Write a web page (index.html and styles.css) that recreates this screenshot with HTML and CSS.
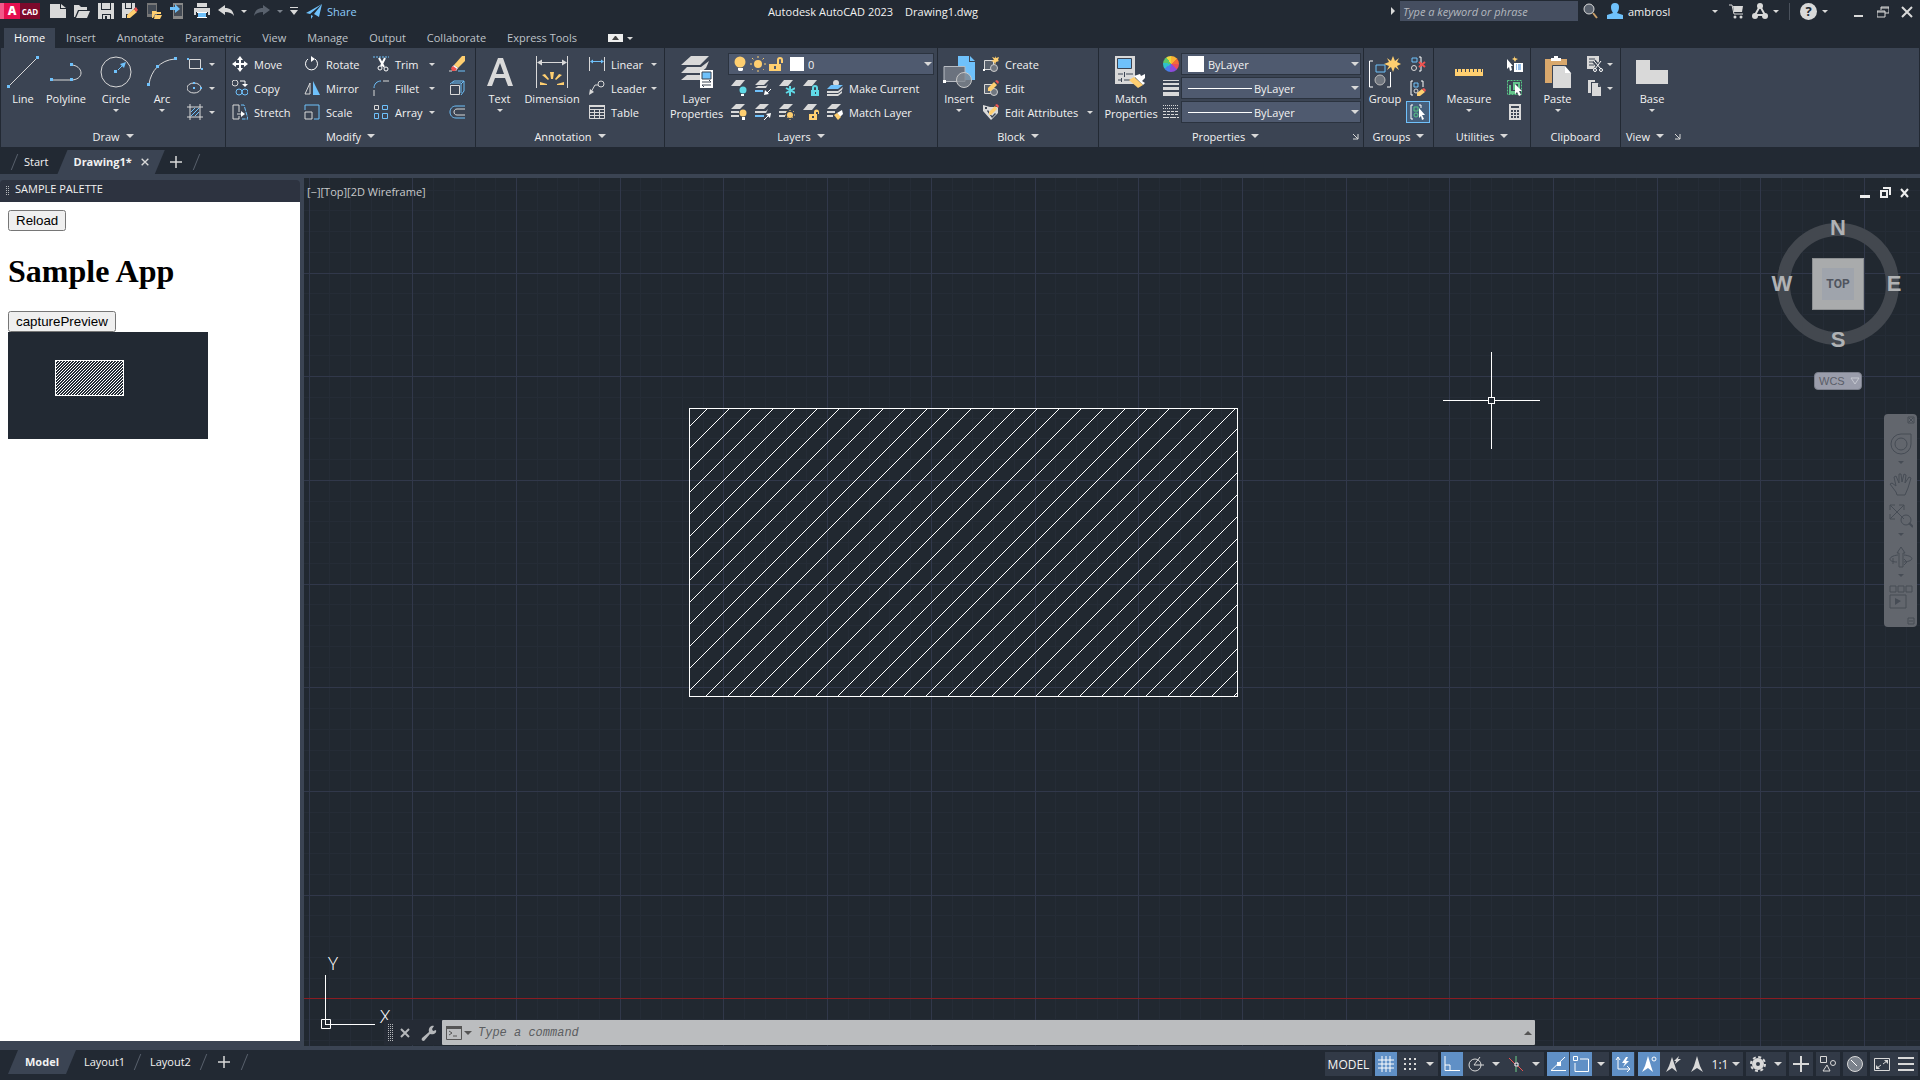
FILE: index.html
```html
<!DOCTYPE html>
<html lang="en">
  <head>
    <meta charset="UTF-8" />
    <meta name="viewport" content="width=device-width, initial-scale=1.0" />
    <title>Autodesk AutoCAD 2023 - Drawing1.dwg</title>
    <link rel="stylesheet" href="styles.css">
  </head>
  <body>
    <!-- Icon sprite -->
    <svg class="sprite" aria-hidden="true">
      <defs>
        <symbol id="new" viewBox="0 0 16 16"><path class="g" d="M0 1h10v5h6v9H0zM11 1l5 4h-5z" /></symbol>
        <symbol id="open" viewBox="0 0 16 16"><path class="g" d="M0 2h5l2 2h6v3H4L1 14H0zM5 8h11l-3 7H2z" /></symbol>
        <symbol id="save" viewBox="0 0 16 16"><path class="g" fill-rule="evenodd" d="M0 0h3v7h10V0h3v16h-3v-5H4v5H0zM4 0h8v6H4zM5 12h7v4H9v-3H7v3H5z" /></symbol>
        <symbol id="saveas" viewBox="0 0 16 16"><path class="g" d="M0 0h3v6h7V0h3v5l-6 6H4v4H0zM4 0h5v5H4z" /><path class="y" d="M5 12l7-6 3 3-7 6H5z" /><path class="r" d="M12 6l2-2 2 3-2 2z" /></symbol>
        <symbol id="webopen" viewBox="0 0 16 16"><path fill="#777" d="M1 0h10v14H1z" /><path fill="#444b55" d="M2 2h8v9H2z" /><path class="y" d="M6 8h4l1 1h4v2H9l-2 4H6zM9 12h7l-2 4H8z" /></symbol>
        <symbol id="websave" viewBox="0 0 16 16"><path fill="#888" d="M3 0h10v16H3z" /><path fill="#444b55" d="M4 2h8v11H4z" /><path class="b" d="M0 4h5V1l5 5-5 4V7H0z" /></symbol>
        <symbol id="print" viewBox="0 0 16 16"><path class="g" d="M3 0h10v4H3zM0 5h16v7h-2V9H2v3H0z" /><path class="b" d="M4 10h8v4H4z" /><path class="w" d="M3 9h10v1H3zM3 14h10v1H3z" /></symbol>
        <symbol id="undo" viewBox="0 0 16 16"><path class="g" d="M0 7l7-5v3c5 0 8 2 9 8-2-3-5-4-9-4v3z" /></symbol>
        <symbol id="redo" viewBox="0 0 16 16"><path fill="#59616d" d="M16 7L9 2v3c-5 0-8 2-9 8 2-3 5-4 9-4v3z" /></symbol>
        <symbol id="custom" viewBox="0 0 10 10"><path class="g" d="M1 1h8v1H1zM1 4h8L5 9z" /></symbol>
        <symbol id="share" viewBox="0 0 16 16"><path class="b" d="M0 10L16 1 4 11zM16 1l-3 13-5-3zM5 12l2 1-2 3z" /></symbol>
        <symbol id="search" viewBox="0 0 16 16"><circle class="gs" cx="7" cy="6" r="5" fill="#59616d" /><path d="M11 10l4 5" stroke="#c9a06a" stroke-width="2" /></symbol>
        <symbol id="user" viewBox="0 0 16 16"><path class="b" d="M4 4a4 4 0 018 0c0 3-1 4-2 6l6 2v4H0v-4l6-2C5 8 4 7 4 4z" /></symbol>
        <symbol id="cart" viewBox="0 0 16 16"><path class="gs" d="M1 2h3l2 9h9" /><path class="g" d="M5 3h10l-1 6H6z" /><circle class="g" cx="7" cy="14" r="1.500" /><circle class="g" cx="13" cy="14" r="1.500" /></symbol>
        <symbol id="app" viewBox="0 0 16 16"><path class="gs" stroke-width="2" d="M8 3L3 12h10z" /><circle class="g" cx="8" cy="3" r="3" /><circle class="g" cx="3" cy="13" r="3" /><circle class="g" cx="13" cy="13" r="3" /></symbol>
        <symbol id="winmin" viewBox="0 0 12 12"><path class="g" d="M1 9h9v2H1z" /></symbol>
        <symbol id="winrest" viewBox="0 0 12 12"><path class="gs" d="M4 4V1h8v6H8M0 5h8v6H0zM4 2h8M0 6h8" /></symbol>
        <symbol id="winclose" viewBox="0 0 12 12"><path class="gs" stroke-width="2" d="M1 1l10 10M11 1L1 11" /></symbol>

        <symbol id="line" viewBox="0 0 32 32"><path class="gs" d="M3 29L29 3" /><path class="b" d="M0 29h3v3H0zM29 0h3v3h-3z" /></symbol>
        <symbol id="pline" viewBox="0 0 32 32"><path class="gs" d="M1 24h20c6 0 10-3 10-7s-4-8-10-8" /><path class="b" d="M0 22h3v3H0zM20 22h3v3h-3zM20 7h3v3h-3z" /></symbol>
        <symbol id="circle" viewBox="0 0 32 32"><circle class="gs" cx="16" cy="16" r="15" /><path class="bs" d="M18 14l6-6" /><path class="b" d="M14 14h3v3h-3zM26 6l-2 6-4-4z" /></symbol>
        <symbol id="arc" viewBox="0 0 32 32"><path class="gs" d="M3 28C5 15 14 4 29 3" /><path class="b" d="M1 27h3v3H1zM10 9h3v3h-3zM28 1h3v3h-3z" /></symbol>
        <symbol id="rect" viewBox="0 0 16 16"><path class="gs" d="M2.500 3.500h11v9h-11z" /><path class="b" d="M0 2h2v2H0zM14 12h2v2h-2z" /></symbol>
        <symbol id="ellipse" viewBox="0 0 16 16"><ellipse class="gs" cx="7" cy="8" rx="7" ry="5" /><path class="b" d="M6 2h2v2H6zM6 7h2v2H6zM13 7h2v2h-2z" /></symbol>
        <symbol id="hatch" viewBox="0 0 16 16"><path class="gs" d="M3 0v16M13 0v16M0 3h16M0 13h16" /><path class="bs" d="M4 8l4-4M4 12l8-8M8 12l4-4" /></symbol>
        <symbol id="move" viewBox="0 0 16 16"><path class="w" d="M8 0l3 4H9v3h3V5l4 3-4 3V9H9v3h2l-3 4-3-4h2V9H4v2L0 8l4-3v2h3V4H5z" /></symbol>
        <symbol id="rotate" viewBox="0 0 16 16"><path class="ws" d="M11 3a6 6 0 11-7 0" /><path class="w" d="M7 0l4 3-4 3z" /></symbol>
        <symbol id="trim" viewBox="0 0 16 16"><path class="bs" stroke-dasharray="2 1" d="M0 1h16" /><path class="ws" stroke-width="2" d="M6 2l5 9M12 2L8 10" /><circle class="ws" cx="7" cy="12" r="2" /><circle class="ws" cx="13" cy="13" r="2" /></symbol>
        <symbol id="copy" viewBox="0 0 16 16"><circle class="gs" cx="3" cy="3" r="3" /><circle class="bs" cx="7" cy="12" r="3" /><circle class="bs" cx="13" cy="12" r="3" /><path class="ws" d="M8 1h5v4" /><path class="w" d="M10 4h6l-3 3z" /></symbol>
        <symbol id="mirror" viewBox="0 0 16 16"><path class="gs" d="M1 14L6 3v11z" /><path class="b" d="M9 1l7 14H9z" /></symbol>
        <symbol id="fillet" viewBox="0 0 16 16"><path class="bs" d="M1 8c0-4 3-7 7-7" /><path class="gs" d="M1 10v6M10 1h6" /></symbol>
        <symbol id="erase" viewBox="0 0 16 16"><path class="y" d="M5 9l8-9h3v5l-7 7z" /><path class="w" d="M3 11l2-2 4 3-2 3z" /><path class="r" d="M2 12l2-2 4 3-2 2H3z" /><path class="bs" d="M9 15h7" /><path class="gs" d="M0 15h3" /></symbol>
        <symbol id="explode" viewBox="0 0 16 16"><path class="gs" d="M1.500 5.500h9v9h-9z" /><path class="bs" d="M1 4l4-3h10v10l-3 4M12 4l3-3M12 4v9M3 3h9" /></symbol>
        <symbol id="stretch" viewBox="0 0 16 16"><path class="gs" d="M1 1h6v7M7 12v3H1V1M5 10h5" /><path class="w" d="M9 7l4 3-4 3z" /><path class="bs" stroke-dasharray="4 1" d="M9 1h3l4 14h-6" /></symbol>
        <symbol id="scale" viewBox="0 0 16 16"><path class="bs" d="M1 6V1h14v14h-5" /><path class="gs" d="M1 8h7v7H1z" /></symbol>
        <symbol id="array" viewBox="0 0 16 16"><path class="gs" d="M1.500 1.500h4v4h-4z" /><path class="bs" d="M9.500 1.500h5v4h-5zM1.500 9.500h4v5h-4zM9.500 9.500h5v5h-5z" /></symbol>
        <symbol id="offset" viewBox="0 0 16 16"><path class="bs" d="M16 2H7C3 2 1 5 1 8s2 6 6 6h9" /><path class="gs" d="M16 5H8C4 5 4 11 8 11h8" /></symbol>

        <symbol id="text" viewBox="0 0 32 32"><path class="g" fill-rule="evenodd" d="M14 2h5l10 28h-5l-3-8H11l-3 8H3zM16 7l-4 11h8z" /></symbol>
        <symbol id="dim" viewBox="0 0 32 32"><path class="gs" d="M.500 0v32M31.500 0v32M3 6.500h26" /><path class="g" d="M1 6.500l5-3v6zM31 6.500l-5-3v6z" /><path class="y" d="M14 16h4l-1 7h-2zM6 19l3-1 4 5-1 1zM26 19l-3-1-4 5 1 1zM4 29v-3l7 2v1zM28 29v-3l-7 2v1z" /></symbol>
        <symbol id="linear" viewBox="0 0 16 16"><path class="gs" d="M.500 1v14M15.500 1v14" /><path class="bs" d="M2 5.500h12" /><path class="b" d="M1 5.500l3-2v4zM15 5.500l-3-2v4z" /></symbol>
        <symbol id="leader" viewBox="0 0 16 16"><circle class="gs" cx="12" cy="4" r="3" /><path class="gs" d="M9 5H6L2 12" /><path class="g" d="M0 15l1-6 4 3z" /></symbol>
        <symbol id="table" viewBox="0 0 16 16"><path class="gs" d="M.500 1.500h15v13H.500zM0 5.500h16M0 8.500h16M0 11.500h16M5.500 5v10M10.500 5v10" /><path class="g" d="M0 1h16v2H0z" /></symbol>

        <symbol id="layerprops" viewBox="0 0 32 32"><path class="g" d="M10 0h18l-9 9H0zM6 11h14l8-6-3 7-6 5H0zM6 19h13v5H0z" /><path class="w" d="M19 14h13v18H19z" /><path class="b" stroke="#3b4453" d="M21 16h9v7h-9z" /><path stroke="#3b4453" fill="none" d="M21 26h9l-2-2M30 29h-9l2 2" /></symbol>
        <symbol id="bulb" viewBox="0 0 16 16"><circle class="y" cx="8" cy="6" r="5.500" /><path class="w" d="M6 12h5v2l-1 1H7l-1-1z" /></symbol>
        <symbol id="sun" viewBox="0 0 16 16"><circle class="y" cx="8" cy="8" r="4" /><path class="ys" stroke-dasharray="2 12" d="M8 0v16M0 8h16" /><path class="ys" stroke-dasharray="2 14" d="M2 2l12 12M14 2L2 14" /></symbol>
        <symbol id="unlock" viewBox="0 0 16 16"><path class="y" fill-rule="evenodd" d="M1 8h8V4a3 3 0 016 0v3h-2V4a1 1 0 00-2 0v4h2v7H1zM6 10h2v3H6z" /></symbol>
        <symbol id="ly-off" viewBox="0 0 16 16"><path class="g" d="M5 0h9L9 6H0z" /><circle class="c" cx="12" cy="10" r="3.500" /><path class="w" d="M10 14h3v2h-3z" /></symbol>
        <symbol id="ly-iso" viewBox="0 0 16 16"><path class="g" d="M5 0h9L9 5H0zM3 6h8l2-2-2 4H0z" /><path class="b" d="M0 10h8v2H0z" /><path class="ws" d="M16 9l-5 5" /><path class="w" d="M9 15l1-5 4 4z" /></symbol>
        <symbol id="ly-frz" viewBox="0 0 16 16"><path class="g" d="M5 0h9L9 6H0z" /><path stroke="#5fd9e6" stroke-width="2" d="M11 6v10M7 8l9 5M7 13l9-5" /></symbol>
        <symbol id="ly-lock" viewBox="0 0 16 16"><path class="g" d="M5 0h9L9 6H0z" /><path class="c" fill-rule="evenodd" d="M8 10h1V8a3 3 0 016 0v2h1v6H8zM11 10h2V8a1 1 0 00-2 0zM12 12v2h1v-2z" /></symbol>
        <symbol id="ly-cur" viewBox="0 0 16 16"><circle class="g" cx="9" cy="3" r="3" /><path class="b" d="M4 5h12l-5 4H0z" /><path class="g" d="M0 11h11l5-4-1 3-4 3H0zM0 14h11l4-3v2l-4 3H0z" /></symbol>
        <symbol id="ly-on" viewBox="0 0 16 16"><path class="g" d="M5 0h9L9 5H0zM0 7h8v2H0zM0 11h8v2H0z" /><circle class="y" cx="12" cy="9" r="3.500" /><path class="w" d="M11 13h3v3h-3z" /></symbol>
        <symbol id="ly-uniso" viewBox="0 0 16 16"><path class="g" d="M5 0h9L9 5H0zM0 7h11l2-2-2 4H0z" /><path class="b" d="M0 11h9v2H0z" /><path class="ws" d="M9 16l5-5" /><path class="w" d="M16 9l-1 5-4-4z" /></symbol>
        <symbol id="ly-thaw" viewBox="0 0 16 16"><path class="g" d="M5 0h9L9 5H0zM0 7h7v2H0zM0 11h6v2H0z" /><circle class="y" cx="11" cy="11" r="3" /><path class="ys" stroke-dasharray="1 8" d="M11 6v10M6 11h10M7 7l8 8M15 7l-8 8" /></symbol>
        <symbol id="ly-unlock" viewBox="0 0 16 16"><path class="g" d="M5 0h9L9 6H0z" /><path class="y" fill-rule="evenodd" d="M6 10h5V8a2 2 0 015 0v2h-1V8h-2v2h1v6H6zM9 12h2v2H9z" /></symbol>
        <symbol id="ly-match" viewBox="0 0 16 16"><path class="g" d="M5 0h9L9 5H0zM0 7h8v2H0zM0 11h6v2H0z" /><path class="w" d="M10 9l5-3 1 4-3 3z" /><path class="y" d="M7 11l3-2 4 4-3 3z" /></symbol>

        <symbol id="insert" viewBox="0 0 32 32"><path class="b" d="M15 0h11v6h6v18H15zM27 0l5 5h-5z" /><path fill="#6b727e" stroke="#b8bcc3" d="M1 10.500h21v15H1z" /><circle cx="21" cy="24" r="7.500" fill="#80868f" fill-opacity=".8" stroke="#c8c8c8" /><path class="w" d="M0 24h3v3H0z" /></symbol>
        <symbol id="create" viewBox="0 0 16 16"><path fill="#59616d" stroke="#d9d9d9" d="M1.500 4.500h9v9h-9z" /><circle cx="11" cy="12" r="3.500" fill="#70767f" stroke="#ccc" /><path class="y" d="M12 0l1 2 3-1-1 3 1 1-3 1-1 3-1-3-3-1 3-1-2-3 3 1z" /><path class="w" d="M0 13h2v2H0z" /></symbol>
        <symbol id="edit" viewBox="0 0 16 16"><path fill="#59616d" stroke="#d9d9d9" d="M1.500 4.500h9v9h-9z" /><circle cx="11" cy="12" r="3.500" fill="#70767f" stroke="#ccc" /><path class="y" d="M5 8l6-6 3 3-6 6H5z" /><path class="r" d="M12 1l2-1 2 2-1 2z" /></symbol>
        <symbol id="attr" viewBox="0 0 16 16"><path class="g" d="M0 1l7 2h8v6l-7 7-8-9z" /><path fill="#3b4453" d="M2 3h2v2H2zM5 6l4 6 3-3 1 1-4 4-5-7z" /><path class="y" d="M6 8l6-6 2 3-6 6H6z" /><path class="r" d="M12 1l2-1 2 2-1 2z" /></symbol>

        <symbol id="matchprops" viewBox="0 0 32 32"><path class="g" d="M0 0h20v28H0z" /><path class="b" stroke="#3b4453" d="M2.500 2.500h14v10h-14z" /><path stroke="#3b4453" d="M3 18h5M11 18h7M3 24h3M9 24h8M9.500 16v5M6.500 22v4" /><path class="w" d="M19 20l6-2 1 2 4-2v4l-3 3 3 2-2 2z" /><path class="y" d="M14 24l5-3 9 8-5 3z" /></symbol>
        <symbol id="lweight" viewBox="0 0 16 16"><path class="g" d="M0 0h16v1H0zM0 3h16v2H0zM0 7h16v3H0zM0 12h16v4H0z" /></symbol>
        <symbol id="ltype" viewBox="0 0 16 16"><path class="gs" stroke-dasharray="1 1" d="M0 1.500h16M0 4.500h16" /><path class="gs" stroke-dasharray="3 1" d="M0 7.500h16M0 10.500h16" /><path class="gs" stroke-dasharray="6 1" d="M0 13.500h16" /></symbol>
        <symbol id="launch" viewBox="0 0 8 8"><path class="gs" d="M1 1l5 5M1 6h5V1" /></symbol>

        <symbol id="group" viewBox="0 0 32 32"><path class="ws" d="M4 5H.500v26H4M18 31h3.500V16" /><path class="bs" d="M7 9h9v7H7z" /><circle cx="11" cy="24" r="5" fill="#70767f" stroke="#bbb" /><path class="y" d="M24 0l2 5 4-3-2 4 4 2-4 2 2 4-4-3-2 5-2-5-4 3 2-4-5-2 5-2-2-4 4 3z" /></symbol>
        <symbol id="ungroup" viewBox="0 0 16 16"><path class="bs" d="M2 2h5v4H2z" /><circle class="gs" cx="4" cy="12" r="2.500" /><path class="ws" d="M9 1h2v14H9" /><path stroke="#ef5350" stroke-width="2" d="M9 6l6 5M15 6l-6 5" /></symbol>
        <symbol id="gedit" viewBox="0 0 16 16"><path class="ws" d="M3 1H1v14h2M11 1h2v6" /><path class="bs" d="M4 3h4v4H4z" /><circle class="gs" cx="6" cy="11" r="2" /><path class="y" d="M7 13l5-4 3 3-5 4H7z" /><path class="r" d="M12 9l2-1 2 2-1 2z" /></symbol>
        <symbol id="gsel" viewBox="0 0 16 16"><path class="ws" d="M3 1H1v14h2M9 1h2v3" /><path class="es" d="M4 3h4v4H4z" /><circle class="es" cx="6" cy="11" r="2" /><path class="w" d="M9 4l6 7h-3l2 4-2 1-1-4-2 2z" /></symbol>

        <symbol id="measure" viewBox="0 0 32 32"><path class="y" d="M2 13h2v3h1v-3h3v3h1v-3h3v3h1v-3h3v3h1v-3h3v3h1v-3h3v3h1v-3h3v3h1v-3h1v7H2z" /></symbol>
        <symbol id="qselect" viewBox="0 0 16 16"><path class="w" d="M0 3l6 7H4l1 4-2 1-1-4-2 2zM7 7h9v9H7z" /><path class="y" d="M7 0l1 2 3 1-2 1-1 2-1-2-2-1 2-1z" /><path stroke="#2b7cd3" stroke-dasharray="1 1 4 0" d="M9 9h5M9 11h5M9 13h5" /></symbol>
        <symbol id="selall" viewBox="0 0 16 16"><path class="es" stroke-dasharray="2 1" d="M.500.500h14v14H.500z" /><path fill="#63c58b" fill-rule="evenodd" d="M6 2h7v8H6zM8 4v3h3V4zM2 5h2v6h5v3H2z" /><path class="w" d="M8 4l7 7h-3l2 4-2 1-2-4-2 2z" /></symbol>
        <symbol id="calc" viewBox="0 0 16 16"><path class="g" d="M2 0h12v16H2z" /><path fill="#3b4453" d="M4 2h8v2H4zM4 6h2v2H4zM7 6h2v2H7zM10 6h2v2h-2zM4 9h2v2H4zM7 9h2v2H7zM10 9h2v2h-2zM4 12h2v2H4zM7 12h2v2H7zM10 12h2v2h-2z" /></symbol>

        <symbol id="paste" viewBox="0 0 32 32"><path fill="#d9a86c" d="M3 3h22v6h-4v18H3z" /><path class="w" d="M9 2h3V0h4v2h3v3H9z" /><path class="g" stroke="#3b4453" d="M10.500 9.500h12l7 8v15h-19z" /><path class="w" d="M23 10l6 7h-6z" /></symbol>
        <symbol id="cut" viewBox="0 0 16 16"><path class="g" d="M0 0h12v13H0z" /><path stroke="#3b4453" fill="none" d="M2 3h6M2 6h5M2 9h5" /><path stroke="#3b4453" stroke-width="4" d="M7 5l8 10M15 5L8 14" /><path class="ws" d="M7 5l7 8M14 5l-6 8" /><circle class="ws" cx="8" cy="14" r="1.500" /><circle class="ws" cx="14" cy="14" r="1.500" /></symbol>
        <symbol id="copyclip" viewBox="0 0 16 16"><path class="g" d="M1 0h7v2H4v11H1z" /><path class="g" d="M5 3h6l3 4v9H5z" /><path fill="#3b4453" d="M11 3l3 4h-3z" /></symbol>
        <symbol id="base" viewBox="0 0 32 32"><path class="g" d="M0 4h14v10h18v14H0z" /></symbol>

        <symbol id="wheel" viewBox="0 0 24 24"><path class="n" d="M12 2h10v10a10 10 0 11-10-10z" /><circle class="n" cx="12" cy="12" r="6" /></symbol>
        <symbol id="pan" viewBox="0 0 24 24"><path class="n" d="M7 20l-6-8 2-1 4 3L5 5l2-1 3 7V2h2l1 8 2-8 2 1-1 8 4-6 2 1-3 10-3 7H8z" /></symbol>
        <symbol id="zoomx" viewBox="0 0 24 24"><path class="n" d="M1 1l14 14M1 15L15 1M1 6V1h5M10 1h5v5M1 10v5h5" /><circle class="n" cx="17" cy="16" r="5" /><path class="n" stroke-width="2" d="M20 19l4 4" /></symbol>
        <symbol id="orbit" viewBox="0 0 24 24"><path class="n" d="M10 22V8L8 8l4-6 4 6h-2v14zM9 10C-1 11-2 17 8 17M15 10c10 1 11 6 0 7M4 13v6M15 14l3 3-3 3" /></symbol>
        <symbol id="motion" viewBox="0 0 24 24"><path class="n" d="M1 1h6v6H1zM9 1h6v6H9zM17 1h6v6h-6zM1 10h16v13H1z" /><path fill="#464c55" d="M6 13l6 3-6 4z" /></symbol>

        <symbol id="cmd" viewBox="0 0 16 14"><path fill="none" stroke="#555" d="M.500.500h15v13H.500zM3 5l3 2-3 2M7 10h4" /><path fill="#555" d="M0 0h16v3H0z" /></symbol>
        <symbol id="wrench" viewBox="0 0 16 16"><path fill="#b5b7ba" d="M1 13l7-6c-1-4 2-7 5-6l-2 3 1 2 3-1c1 3-2 5-6 4l-6 7c-2 0-3-1-2-3z" /></symbol>
        <symbol id="s-grid" viewBox="0 0 16 16"><path class="ws" d="M4 0v16M8 0v16M12 0v16M0 4h16M0 8h16M0 12h16" /></symbol>
        <symbol id="s-snap" viewBox="0 0 16 16"><path class="gs" stroke-width="2" stroke-dasharray="2 3" d="M2 3h13M2 8h13M2 13h13" /></symbol>
        <symbol id="s-ortho" viewBox="0 0 16 16"><path class="ws" d="M1 0v14.500h15M1 9h5v5" /></symbol>
        <symbol id="s-polar" viewBox="0 0 16 16"><circle class="gs" cx="7" cy="9" r="6" /><path class="gs" d="M6 9h10M6 9l6-8" /></symbol>
        <symbol id="s-iso" viewBox="0 0 16 16"><path stroke="#ef5350" d="M1 2l6 6M10 10l5 5" /><path stroke="#6fd08a" d="M8 0v6M8 11v5" /><path class="ws" d="M7 7h3v3H7z" /></symbol>
        <symbol id="s-track" viewBox="0 0 16 16"><path class="ws" d="M15 1L1 14.500h15" /><path class="w" d="M7 6h4v4H7z" /></symbol>
        <symbol id="s-osnap" viewBox="0 0 16 16"><path class="ws" d="M.500.500h4v4h-4zM7 3h8.500v12.500H2V7" /></symbol>
        <symbol id="s-ucs" viewBox="0 0 16 16"><path class="ws" d="M3 1v12h12M1 4l2-3 2 3M12 10l3 3-3 3" /><path class="w" d="M11 1L7 7h3l-2 4 6-6h-3l2-4z" /></symbol>
        <symbol id="s-ann1" viewBox="0 0 16 16"><path class="w" d="M7 0l3 10 2 6-5-4-6 4 3-6z" /><circle class="ws" cx="13" cy="3" r="2" /></symbol>
        <symbol id="s-ann2" viewBox="0 0 16 16"><path class="g" d="M7 1l3 9 2 6-5-4-6 4 3-6zM14 0l-5 5h2l-1 3 6-5h-3z" /></symbol>
        <symbol id="s-ann3" viewBox="0 0 16 16"><path class="g" d="M8 0l3 10 3 6-6-4-6 4 3-6z" /></symbol>
        <symbol id="s-gear" viewBox="0 0 16 16"><circle cx="8" cy="8" r="4" fill="none" stroke="#d9d9d9" stroke-width="4" /><circle cx="8" cy="8" r="7" fill="none" stroke="#d9d9d9" stroke-width="2" stroke-dasharray="3 2.500" /></symbol>
        <symbol id="s-plus" viewBox="0 0 16 16"><path class="gs" stroke-width="2" d="M8 0v16M0 8h16" /></symbol>
        <symbol id="s-iso2" viewBox="0 0 16 16"><path class="gs" d="M.500.500h6v6h-6zM3 15l4-6 3 6z" /><circle class="gs" cx="13" cy="7" r="2.500" /></symbol>
        <symbol id="s-perf" viewBox="0 0 16 16"><circle cx="8" cy="8" r="7.500" fill="#7b828c" stroke="#d9d9d9" /><path class="ws" d="M4 4l6 6" /></symbol>
        <symbol id="s-full" viewBox="0 0 16 16"><path class="gs" d="M.500 2.500h15v12H.500zM9 8l4-3M3 12l4-3" /><path class="g" d="M10 4h4v4zM2 9l4 4H2z" /></symbol>
        <symbol id="s-menu" viewBox="0 0 16 16"><path class="g" d="M0 1h16v2H0zM0 7h16v2H0zM0 13h16v2H0z" /></symbol>
      </defs>
    </svg>

    <!-- Title bar -->
    <header class="titlebar">
      <button class="logo" aria-label="Application menu"><b>A</b><span>CAD</span></button>
      <div class="quick">
        <button aria-label="New"><svg><use href="#new" /></svg></button>
        <button aria-label="Open"><svg><use href="#open" /></svg></button>
        <button aria-label="Save"><svg><use href="#save" /></svg></button>
        <button aria-label="Save as"><svg><use href="#saveas" /></svg></button>
        <button aria-label="Open from web"><svg><use href="#webopen" /></svg></button>
        <button aria-label="Save to web"><svg><use href="#websave" /></svg></button>
        <button aria-label="Plot"><svg><use href="#print" /></svg></button>
        <button aria-label="Undo"><svg><use href="#undo" /></svg></button>
        <i class="arrow"></i>
        <button aria-label="Redo"><svg><use href="#redo" /></svg></button>
        <i class="arrow dim"></i>
        <button class="narrow" aria-label="Customize"><svg><use href="#custom" /></svg></button>
        <button class="share"><svg><use href="#share" /></svg>Share</button>
      </div>
      <div class="doc-title"><span>Autodesk AutoCAD 2023</span><span>Drawing1.dwg</span></div>
      <div class="account">
        <i class="arrow side"></i>
        <input type="text" class="help-search" aria-label="Search" placeholder="Type a keyword or phrase" />
        <button aria-label="Search"><svg><use href="#search" /></svg></button>
        <button class="user"><svg><use href="#user" /></svg>ambrosl<i class="arrow"></i></button>
        <button aria-label="Store"><svg><use href="#cart" /></svg></button>
        <button class="with-arrow" aria-label="Apps"><svg><use href="#app" /></svg><i class="arrow"></i></button>
        <button class="with-arrow help" aria-label="Help"><b>?</b><i class="arrow"></i></button>
      </div>
      <div class="window-buttons">
        <button aria-label="Minimize"><svg><use href="#winmin" /></svg></button>
        <button aria-label="Restore"><svg><use href="#winrest" /></svg></button>
        <button aria-label="Close"><svg><use href="#winclose" /></svg></button>
      </div>
    </header>

    <!-- Ribbon tabs -->
    <nav class="ribbon-tabs">
      <a href="#" class="active">Home</a>
      <a href="#">Insert</a>
      <a href="#">Annotate</a>
      <a href="#">Parametric</a>
      <a href="#">View</a>
      <a href="#">Manage</a>
      <a href="#">Output</a>
      <a href="#">Collaborate</a>
      <a href="#">Express Tools</a>
      <button class="collapse" aria-label="Minimize ribbon"><span><i></i></span><i class="arrow"></i></button>
    </nav>

    <!-- Ribbon -->
    <div class="ribbon">
      <section class="panel draw">
        <div class="panel-body">
          <button class="big"><svg><use href="#line" /></svg>Line</button>
          <button class="big"><svg><use href="#pline" /></svg>Polyline</button>
          <button class="big"><svg><use href="#circle" /></svg>Circle<i class="arrow"></i></button>
          <button class="big"><svg><use href="#arc" /></svg>Arc<i class="arrow"></i></button>
          <div class="tools">
            <button class="tool" aria-label="Rectangle"><svg><use href="#rect" /></svg><i class="arrow"></i></button>
            <button class="tool" aria-label="Ellipse"><svg><use href="#ellipse" /></svg><i class="arrow"></i></button>
            <button class="tool" aria-label="Hatch"><svg><use href="#hatch" /></svg><i class="arrow"></i></button>
          </div>
        </div>
        <button class="panel-title">Draw<i class="arrow wide"></i></button>
      </section>

      <section class="panel modify">
        <div class="panel-body">
          <div class="tools">
            <button class="tool"><svg><use href="#move" /></svg>Move</button>
            <button class="tool"><svg><use href="#rotate" /></svg>Rotate</button>
            <button class="tool"><svg><use href="#trim" /></svg>Trim<i class="arrow"></i></button>
            <button class="tool" aria-label="Erase"><svg><use href="#erase" /></svg></button>
            <button class="tool"><svg><use href="#copy" /></svg>Copy</button>
            <button class="tool"><svg><use href="#mirror" /></svg>Mirror</button>
            <button class="tool"><svg><use href="#fillet" /></svg>Fillet<i class="arrow"></i></button>
            <button class="tool" aria-label="Explode"><svg><use href="#explode" /></svg></button>
            <button class="tool"><svg><use href="#stretch" /></svg>Stretch</button>
            <button class="tool"><svg><use href="#scale" /></svg>Scale</button>
            <button class="tool"><svg><use href="#array" /></svg>Array<i class="arrow"></i></button>
            <button class="tool" aria-label="Offset"><svg><use href="#offset" /></svg></button>
          </div>
        </div>
        <button class="panel-title">Modify<i class="arrow wide"></i></button>
      </section>

      <section class="panel annotation">
        <div class="panel-body">
          <button class="big"><svg><use href="#text" /></svg>Text<i class="arrow"></i></button>
          <button class="big"><svg><use href="#dim" /></svg>Dimension</button>
          <div class="tools">
            <button class="tool"><svg><use href="#linear" /></svg>Linear<i class="arrow"></i></button>
            <button class="tool"><svg><use href="#leader" /></svg>Leader<i class="arrow"></i></button>
            <button class="tool"><svg><use href="#table" /></svg>Table</button>
          </div>
        </div>
        <button class="panel-title">Annotation<i class="arrow wide"></i></button>
      </section>

      <section class="panel layers">
        <div class="panel-body">
          <button class="big"><svg><use href="#layerprops" /></svg>Layer<br>Properties</button>
          <div class="stack">
            <label class="combo">
              <svg><use href="#bulb" /></svg>
              <svg><use href="#sun" /></svg>
              <svg><use href="#unlock" /></svg>
              <span class="swatch"></span>
              <select aria-label="Layer"><option>0</option></select>
              <i class="arrow wide"></i>
            </label>
            <div class="tools">
              <button class="tool" aria-label="Off"><svg><use href="#ly-off" /></svg></button>
              <button class="tool" aria-label="Isolate"><svg><use href="#ly-iso" /></svg></button>
              <button class="tool" aria-label="Freeze"><svg><use href="#ly-frz" /></svg></button>
              <button class="tool" aria-label="Lock"><svg><use href="#ly-lock" /></svg></button>
              <button class="tool"><svg><use href="#ly-cur" /></svg>Make Current</button>
              <button class="tool" aria-label="Turn all on"><svg><use href="#ly-on" /></svg></button>
              <button class="tool" aria-label="Unisolate"><svg><use href="#ly-uniso" /></svg></button>
              <button class="tool" aria-label="Thaw all"><svg><use href="#ly-thaw" /></svg></button>
              <button class="tool" aria-label="Unlock"><svg><use href="#ly-unlock" /></svg></button>
              <button class="tool"><svg><use href="#ly-match" /></svg>Match Layer</button>
            </div>
          </div>
        </div>
        <button class="panel-title">Layers<i class="arrow wide"></i></button>
      </section>

      <section class="panel block">
        <div class="panel-body">
          <button class="big"><svg><use href="#insert" /></svg>Insert<i class="arrow"></i></button>
          <div class="tools">
            <button class="tool"><svg><use href="#create" /></svg>Create</button>
            <button class="tool"><svg><use href="#edit" /></svg>Edit</button>
            <button class="tool"><svg><use href="#attr" /></svg>Edit Attributes<i class="arrow"></i></button>
          </div>
        </div>
        <button class="panel-title">Block<i class="arrow wide"></i></button>
      </section>

      <section class="panel properties">
        <div class="panel-body">
          <button class="big"><svg><use href="#matchprops" /></svg>Match<br>Properties</button>
          <div class="props">
            <span class="color-wheel"></span>
            <label class="combo">
              <span class="swatch"></span>
              <select aria-label="Object color"><option>ByLayer</option></select>
              <i class="arrow wide"></i>
            </label>
            <svg><use href="#lweight" /></svg>
            <label class="combo">
              <span class="stroke"></span>
              <select aria-label="Lineweight"><option>ByLayer</option></select>
              <i class="arrow wide"></i>
            </label>
            <svg><use href="#ltype" /></svg>
            <label class="combo">
              <span class="stroke"></span>
              <select aria-label="Linetype"><option>ByLayer</option></select>
              <i class="arrow wide"></i>
            </label>
          </div>
        </div>
        <div class="panel-foot">
          <button class="panel-title">Properties<i class="arrow wide"></i></button>
          <button class="launcher" aria-label="Properties palette"><svg><use href="#launch" /></svg></button>
        </div>
      </section>

      <section class="panel groups">
        <div class="panel-body">
          <button class="big"><svg><use href="#group" /></svg>Group</button>
          <div class="tools">
            <button class="tool" aria-label="Ungroup"><svg><use href="#ungroup" /></svg></button>
            <button class="tool" aria-label="Group edit"><svg><use href="#gedit" /></svg></button>
            <button class="tool selected" aria-label="Group selection"><svg><use href="#gsel" /></svg></button>
          </div>
        </div>
        <button class="panel-title">Groups<i class="arrow wide"></i></button>
      </section>

      <section class="panel utilities">
        <div class="panel-body">
          <button class="big"><svg><use href="#measure" /></svg>Measure<i class="arrow"></i></button>
          <div class="tools">
            <button class="tool" aria-label="Quick select"><svg><use href="#qselect" /></svg></button>
            <button class="tool" aria-label="Select all"><svg><use href="#selall" /></svg></button>
            <button class="tool" aria-label="Calculator"><svg><use href="#calc" /></svg></button>
          </div>
        </div>
        <button class="panel-title">Utilities<i class="arrow wide"></i></button>
      </section>

      <section class="panel clipboard">
        <div class="panel-body">
          <button class="big"><svg><use href="#paste" /></svg>Paste<i class="arrow"></i></button>
          <div class="tools">
            <button class="tool" aria-label="Cut"><svg><use href="#cut" /></svg><i class="arrow"></i></button>
            <button class="tool" aria-label="Copy clip"><svg><use href="#copyclip" /></svg><i class="arrow"></i></button>
          </div>
        </div>
        <button class="panel-title">Clipboard</button>
      </section>

      <section class="panel view">
        <div class="panel-body">
          <button class="big"><svg><use href="#base" /></svg>Base<i class="arrow"></i></button>
        </div>
        <div class="panel-foot">
          <button class="panel-title">View<i class="arrow wide"></i></button>
          <button class="launcher" aria-label="View options"><svg><use href="#launch" /></svg></button>
        </div>
      </section>
    </div>

    <!-- Drawing tabs -->
    <nav class="file-tabs">
      <i class="slash"></i>
      <a href="#">Start</a>
      <a href="#" class="active">Drawing1*<svg><use href="#winclose" /></svg></a>
      <button aria-label="New drawing"><svg><use href="#s-plus" /></svg></button>
      <i class="slash"></i>
    </nav>

    <main class="workspace">
      <aside class="palette">
        <div class="palette-title"><i class="grip"></i>SAMPLE PALETTE</div>
        <div class="palette-page">
          <button>Reload</button>
          <h1>Sample App</h1>
          <button>capturePreview</button>
          <svg class="preview" viewBox="0 0 200 107">
            <defs>
              <pattern id="tiny" width="3" height="3" patternUnits="userSpaceOnUse"><path d="M0 2h1v1H0zM1 1h1v1H1zM2 0h1v1H2z" fill="#fff" /></pattern>
            </defs>
            <rect x="47.500" y="28.500" width="68" height="35" fill="url(#tiny)" stroke="#fff" />
          </svg>
        </div>
      </aside>

      <div class="viewport">
        <svg class="drawing" id="drawing">
          <defs>
            <clipPath id="hatchClip"><rect x="385" y="230" width="549" height="289" /></clipPath>
          </defs>
          <g id="gridMinor"></g>
          <g id="gridMajor"></g>
          <path class="axis" d="M0 820.500H4000" />
          <g id="hatchLines" clip-path="url(#hatchClip)"></g>
          <rect class="outline" x="385.500" y="230.500" width="548" height="288" />
          <path class="cursor" d="M1139 222.500h45M1191 222.500h45M1187.500 174v45M1187.500 226v45M1184.500 219.500h6v6h-6z" />
        </svg>

        <div class="view-label">[−][Top][2D Wireframe]</div>

        <div class="view-buttons">
          <button aria-label="Minimize"><svg viewBox="0 0 12 12"><path fill="#eee" d="M1 8h10v3H1z" /></svg></button>
          <button aria-label="Restore"><svg viewBox="0 0 12 12"><path fill="none" stroke="#eee" stroke-width="2" d="M2 4h6v6H2zM4 1h7v7" /></svg></button>
          <button aria-label="Close"><svg viewBox="0 0 12 12"><path stroke="#eee" stroke-width="2" d="M2 2l7 8M9 2l-7 8" /></svg></button>
        </div>

        <div class="viewcube">
          <span class="n-dir">N</span>
          <span class="w-dir">W</span>
          <button class="face"><span>TOP</span></button>
          <span class="e-dir">E</span>
          <span class="s-dir">S</span>
        </div>
        <button class="wcs">WCS<svg viewBox="0 0 10 8"><path fill="none" stroke="#c5c8d0" d="M1 1h8L5 7z" /></svg></button>

        <div class="navbar">
          <svg class="mini" viewBox="0 0 8 8"><path class="n" d="M1 1h6v6H1zM2 2l4 4M6 2L2 6" /></svg>
          <button aria-label="Steering wheel"><svg><use href="#wheel" /></svg><i class="arrow"></i></button>
          <button aria-label="Pan"><svg><use href="#pan" /></svg></button>
          <button aria-label="Zoom extents"><svg><use href="#zoomx" /></svg><i class="arrow"></i></button>
          <button aria-label="Orbit"><svg><use href="#orbit" /></svg><i class="arrow"></i></button>
          <button aria-label="ShowMotion"><svg><use href="#motion" /></svg></button>
          <svg class="mini" viewBox="0 0 8 8"><path class="n" d="M1 1h6v6H1zM2 4h4" /></svg>
        </div>

        <svg class="ucs" viewBox="0 0 80 80">
          <path d="M8.500 20v49M8 69.500h50M4.500 64.500h9v9h-9z" />
          <text x="11" y="15">Y</text>
          <text x="63" y="68">X</text>
        </svg>

        <form class="command">
          <i class="grip"></i>
          <button type="button" aria-label="Close"><svg viewBox="0 0 12 12"><path stroke="#b5b7ba" stroke-width="2" d="M2 2l8 8M10 2l-8 8" /></svg></button>
          <button type="button" aria-label="Customize"><svg><use href="#wrench" /></svg></button>
          <div class="command-line">
            <svg><use href="#cmd" /></svg>
            <i class="arrow wide"></i>
            <input type="text" aria-label="Command" placeholder="Type a command" />
            <i class="arrow up"></i>
          </div>
        </form>
      </div>
    </main>

    <!-- Layout tabs and status bar -->
    <footer class="statusbar">
      <nav class="layout-tabs">
        <a href="#" class="active">Model</a>
        <a href="#">Layout1</a>
        <i class="slash"></i>
        <a href="#">Layout2</a>
        <i class="slash"></i>
        <button aria-label="New layout"><svg><use href="#s-plus" /></svg></button>
        <i class="slash"></i>
      </nav>
      <div class="status">
        <div class="status-group"><button class="model">MODEL</button></div>
        <div class="status-group">
          <button class="on" aria-label="Grid"><svg><use href="#s-grid" /></svg></button>
          <button aria-label="Snap"><svg><use href="#s-snap" /></svg></button>
          <button class="drop" aria-label="Snap settings"><i class="arrow wide"></i></button>
        </div>
        <div class="status-group">
          <button class="on" aria-label="Ortho"><svg><use href="#s-ortho" /></svg></button>
          <button aria-label="Polar"><svg><use href="#s-polar" /></svg></button>
          <button class="drop" aria-label="Polar settings"><i class="arrow wide"></i></button>
          <button aria-label="Isodraft"><svg><use href="#s-iso" /></svg></button>
          <button class="drop" aria-label="Isodraft settings"><i class="arrow wide"></i></button>
        </div>
        <div class="status-group">
          <button class="on" aria-label="Tracking"><svg><use href="#s-track" /></svg></button>
          <button class="on" aria-label="Object snap"><svg><use href="#s-osnap" /></svg></button>
          <button class="drop" aria-label="Object snap settings"><i class="arrow wide"></i></button>
        </div>
        <div class="status-group"><button class="on" aria-label="Dynamic UCS"><svg><use href="#s-ucs" /></svg></button></div>
        <div class="status-group">
          <button class="on" aria-label="Annotation visibility"><svg><use href="#s-ann1" /></svg></button>
          <button aria-label="Auto scale"><svg><use href="#s-ann2" /></svg></button>
          <button aria-label="Annotation scale"><svg><use href="#s-ann3" /></svg></button>
          <button class="scale">1:1<i class="arrow wide"></i></button>
        </div>
        <div class="status-group">
          <button aria-label="Workspace"><svg><use href="#s-gear" /></svg></button>
          <button class="drop" aria-label="Workspace list"><i class="arrow wide"></i></button>
        </div>
        <div class="status-group"><button aria-label="Annotation monitor"><svg><use href="#s-plus" /></svg></button></div>
        <div class="status-group"><button aria-label="Isolate objects"><svg><use href="#s-iso2" /></svg></button></div>
        <div class="status-group"><button aria-label="Performance"><svg><use href="#s-perf" /></svg></button></div>
        <div class="status-group">
          <button aria-label="Clean screen"><svg><use href="#s-full" /></svg></button>
          <button aria-label="Customization"><svg><use href="#s-menu" /></svg></button>
        </div>
      </div>
    </footer>

    <script src="script.js"></script>
  </body>
</html>
```
FILE: styles.css
```css
* {
  box-sizing: border-box;
}
body {
  margin: 0;
  height: 100vh;
  display: flex;
  flex-direction: column;
  overflow: hidden;
  background-color: #222933;
  color: #f2f2f2;
  font-family: "Open Sans", "Noto Sans", sans-serif;
  font-size: 11px;
  line-height: 15px;
}
a {
  color: inherit;
  text-decoration: none;
}
button {
  font-family: inherit;
}
.titlebar button,
.ribbon-tabs button,
.ribbon button,
.file-tabs button,
.viewport button,
.statusbar button {
  background: none;
  border: none;
  padding: 0;
  color: inherit;
  font: inherit;
  display: flex;
  align-items: center;
}
svg {
  width: 16px;
  height: 16px;
  flex: none;
  overflow: visible;
}
.sprite {
  position: absolute;
  width: 0;
  height: 0;
}

/* icon colours */
.g { fill: #d9d9d9; }
.w { fill: #fff; }
.b { fill: #6fc1fb; }
.y { fill: #ffcf70; }
.r { fill: #ef5350; }
.c { fill: #5fd9e6; }
.gs { stroke: #d9d9d9; }
.ws { stroke: #fff; }
.bs { stroke: #6fc1fb; }
.ys { stroke: #ffcf70; }
.es { stroke: #57c785; }
.gs:not([fill]),
.ws,
.bs,
.ys,
.es {
  fill: none;
}
.n {
  fill: none;
  stroke: #464c55;
}

.arrow {
  flex: none;
  width: 0;
  height: 0;
  border: 3px solid transparent;
  border-top-color: #d9d9d9;
  border-bottom: none;
}
.arrow.wide {
  border-width: 4px;
  border-bottom: none;
}
.arrow.dim {
  border-top-color: #7b828c;
}
.arrow.side {
  border: 4px solid transparent;
  border-left-color: #d9d9d9;
  border-right: none;
}
.arrow.up {
  border: 4px solid transparent;
  border-bottom-color: #555;
  border-top: none;
}

/* title bar */
.titlebar {
  height: 28px;
  display: flex;
  align-items: flex-start;
  position: relative;
}
.titlebar .logo {
  height: 16px;
  margin: 3px 6px 0 0;
  border-left: 4px solid #f2588a;
  background-color: #7c0a2c;
  color: #fff;
  font-weight: bold;
}
.logo b {
  width: 16px;
  line-height: 16px;
  background-color: #e51050;
  font-size: 12px;
  text-align: center;
}
.logo span {
  width: 20px;
  font-size: 8px;
  text-align: center;
}
.quick {
  display: flex;
  align-items: center;
  height: 22px;
}
.quick button {
  width: 24px;
  justify-content: center;
}
.quick .arrow {
  margin: 0 3px;
}
.quick .narrow {
  width: 16px;
}
.narrow svg {
  width: 10px;
  height: 10px;
}
.quick .share {
  width: auto;
  gap: 5px;
  margin-left: 4px;
  color: #8ccbfb;
}
.doc-title {
  position: absolute;
  left: 0;
  right: 174px;
  top: 4px;
  display: flex;
  justify-content: center;
  gap: 12px;
  pointer-events: none;
}
.account {
  display: flex;
  align-items: center;
  height: 22px;
  margin-left: auto;
}
.help-search {
  width: 178px;
  height: 20px;
  margin: 0 4px 0 5px;
  padding: 0 3px;
  border: none;
  border-radius: 0;
  background-color: #454e60;
  color: #fff;
  font: italic 11px "Open Sans", sans-serif;
}
.help-search::placeholder {
  color: #b4b8bf;
  opacity: 1;
}
.account .user {
  width: 111px;
  gap: 5px;
  margin: 0 10px 0 9px;
}
.user .arrow {
  margin-left: auto;
}
.account .with-arrow {
  gap: 5px;
  margin-left: 8px;
}
.account .help {
  margin-left: 10px;
  padding-left: 10px;
  border-left: 1px solid #4a515c;
}
.help b {
  width: 17px;
  height: 17px;
  border-radius: 50%;
  background-color: #d9d9d9;
  color: #222933;
  font-size: 13px;
  line-height: 17px;
  text-align: center;
}
.window-buttons {
  display: flex;
  gap: 12px;
  height: 24px;
  margin: 0 7px 0 25px;
}
.window-buttons svg {
  width: 12px;
  height: 12px;
}

/* ribbon tabs */
.ribbon-tabs {
  height: 20px;
  display: flex;
  gap: 1px;
  padding-left: 4px;
  color: #bfc3c9;
}
.ribbon-tabs a {
  padding: 2px 10px;
}
.ribbon-tabs .active {
  background-color: #3b4453;
  color: #fff;
}
.ribbon-tabs .collapse {
  gap: 4px;
  margin: 0 20px;
}
.collapse span {
  width: 15px;
  height: 8px;
  padding: 2px 4px;
  background-color: #eee;
}
.collapse span i {
  display: block;
  border: 3px solid transparent;
  border-bottom: 4px solid #444;
  border-top: none;
}

/* ribbon */
.ribbon {
  display: flex;
  margin: 0 1px;
  background-color: #3b4453;
}
.panel {
  flex: none;
  display: flex;
  flex-direction: column;
  border-right: 1px solid #222933;
}
.panel-body {
  display: flex;
  height: 79px;
  padding-top: 4px;
}
.ribbon .panel-title {
  justify-content: center;
  gap: 6px;
  height: 20px;
  flex: 1;
  padding-bottom: 2px;
}
.panel-foot {
  display: flex;
  padding-right: 3px;
}
.panel-foot .launcher {
  width: 8px;
}
.launcher svg {
  width: 8px;
  height: 8px;
}
.ribbon .big {
  flex-direction: column;
  padding-top: 4px;
  text-align: center;
}
.big svg {
  width: 32px;
  height: 32px;
  margin-bottom: 3px;
}
.big .arrow {
  margin-top: 3px;
}
.tools {
  display: grid;
  grid-auto-rows: 24px;
  align-content: start;
}
.tool svg {
  margin-right: 6px;
}
.tool .arrow {
  margin-left: auto;
}
.combo {
  display: flex;
  align-items: center;
  gap: 2px;
  height: 22px;
  margin: 1px 0;
  padding: 0 1px 0 3px;
  border: 1px solid #2b333f;
  background-color: #4f5a6f;
}
.combo select {
  flex: 1;
  min-width: 0;
  appearance: none;
  border: none;
  padding: 0;
  background: none;
  color: inherit;
  font: inherit;
}
.swatch {
  width: 14px;
  height: 14px;
  background-color: #fff;
}

.draw {
  width: 225px;
}
.draw .panel-body {
  display: grid;
  grid-template-columns: 44px 42px 58px 34px 36px;
}
.draw .tools {
  padding-left: 8px;
}
.draw .tool svg {
  margin-right: 0;
}
.modify {
  width: 250px;
}
.modify .tools {
  grid-template-columns: 72px 69px 76px 16px;
  padding-left: 6px;
}
.modify .tool .arrow {
  margin-right: 14px;
}
.annotation {
  width: 189px;
}
.annotation .panel-body {
  display: grid;
  grid-template-columns: 47px 58px 76px;
}
.annotation .tools {
  padding-left: 8px;
}
.layers {
  width: 273px;
}
.layers .panel-body > .big {
  width: 63px;
}
.layers .stack {
  flex: 1;
  padding-right: 3px;
}
.layers .tools {
  grid-template-columns: repeat(4, 24px) auto;
  padding-left: 3px;
}
.stack .swatch {
  margin: 0 2px 0 4px;
}
.block {
  width: 161px;
}
.block .panel-body > .big {
  width: 42px;
}
.block .tools {
  flex: 1;
  padding: 0 5px 0 3px;
}
.properties {
  width: 265px;
}
.properties .panel-body > .big {
  width: 64px;
}
.props {
  flex: 1;
  display: grid;
  grid-template-columns: 16px 1fr;
  grid-auto-rows: 24px;
  align-items: center;
  column-gap: 2px;
  padding-right: 2px;
}
.props .combo {
  padding-left: 6px;
}
.props .swatch {
  width: 16px;
  height: 16px;
  margin-right: 2px;
}
.stroke {
  width: 64px;
  height: 1px;
  background-color: #fff;
}
.color-wheel {
  width: 16px;
  height: 16px;
  border-radius: 50%;
  background: conic-gradient(#f9b233 0 45deg, #f26b3a 0 90deg, #ea4c5f 0 135deg, #8d4bdb 0 190deg, #4a7dea 0 235deg, #2fc1c9 0 280deg, #5cc76a 0 325deg, #e9d93f 0);
}
.groups {
  width: 70px;
}
.groups .panel-body > .big {
  width: 42px;
}
.groups .tool {
  width: 24px;
  justify-content: center;
}
.groups .tool svg,
.utilities .tool svg {
  margin: 0;
}
.groups .selected {
  height: 22px;
  margin-top: 1px;
  border: 1px solid #6fc1fb;
  background-color: #46607d;
}
.utilities {
  width: 97px;
}
.utilities .panel-body > .big {
  width: 70px;
}
.utilities .tools {
  padding-left: 3px;
}
.clipboard {
  width: 90px;
}
.clipboard .panel-body > .big {
  width: 53px;
}
.clipboard .tools {
  padding-left: 3px;
}
.clipboard .tool svg {
  margin-right: 4px;
}
.view {
  border-right: none;
}
.view .panel-body > .big {
  width: 62px;
}
.view .panel-foot {
  gap: 10px;
  padding-left: 5px;
}

/* slanted tabs */
.file-tabs,
.layout-tabs {
  display: flex;
  align-items: center;
}
.file-tabs {
  height: 27px;
  padding-left: 10px;
  border-top: 3px solid #222933;
}
.file-tabs a,
.layout-tabs a {
  display: flex;
  align-items: center;
  height: 24px;
  padding: 0 8px 1px;
}
.file-tabs a,
.file-tabs .slash {
  margin-right: 1px;
}
.file-tabs .active,
.layout-tabs .active {
  padding: 0 16px 1px;
  background-color: #3b4453;
  font-weight: bold;
  clip-path: polygon(10px 0, 100% 0, calc(100% - 10px) 100%, 0 100%);
}
.layout-tabs .active {
  padding: 0 17px 1px;
}
.file-tabs .active svg {
  width: 8px;
  height: 8px;
  margin-left: 9px;
}
.slash {
  width: 1px;
  height: 16px;
  margin: 0 4px;
  background-color: #59616d;
  transform: skewX(-22deg);
}
.file-tabs button,
.layout-tabs button {
  margin: 0 10px;
}
.file-tabs button {
  margin-left: 4px;
}
.file-tabs button svg,
.layout-tabs button svg {
  width: 12px;
  height: 12px;
}

/* workspace */
.workspace {
  flex: 1;
  min-height: 0;
  display: flex;
  gap: 4px;
  border: solid #3b4453;
  border-width: 4px 0;
  background-color: #3b4453;
}
.palette {
  width: 300px;
  flex: none;
  display: flex;
  flex-direction: column;
  padding: 2px 0 5px;
}
.palette-title {
  display: flex;
  gap: 5px;
  height: 22px;
  padding: 1px 6px;
  border-radius: 4px 4px 0 0;
  background-color: #2d3340;
}
.grip {
  width: 4px;
  height: 10px;
  margin-top: 5px;
  background-image: linear-gradient(90deg, #b5b7ba 50%, transparent 50%);
  background-size: 2px 2px;
  mask: repeating-linear-gradient(#000 0 1px, transparent 1px 2px);
}
.palette-page {
  flex: 1;
  padding: 8px;
  background-color: #fff;
  color: #000;
  font: 16px "Liberation Serif", serif;
}
.palette-page button {
  display: block;
  font-family: "Liberation Sans", Arial, sans-serif;
}
.palette-page h1 {
  margin: 22px 0 21px;
  font-size: 32px;
  line-height: 37px;
}
.preview {
  display: block;
  width: 200px;
  height: 107px;
  background-color: #222933;
}

.viewport {
  flex: 1;
  min-width: 0;
  position: relative;
  overflow: hidden;
  background-color: #212830;
}
.drawing {
  position: absolute;
  inset: 0;
  width: 100%;
  height: 100%;
}
.drawing path,
.drawing rect {
  fill: none;
  shape-rendering: crispEdges;
}
#gridMinor path {
  stroke: #252c36;
}
#gridMajor path {
  stroke: #31384a;
}
.axis {
  stroke: #8a1c22;
}
#hatchLines path,
.outline,
.cursor {
  stroke: #fff;
}
.view-label {
  position: absolute;
  left: 3px;
  top: 6px;
  color: #c8cacc;
}
.view-buttons {
  position: absolute;
  right: 9px;
  top: 9px;
  display: flex;
  gap: 8px;
}
.view-buttons svg {
  width: 12px;
  height: 12px;
}
.viewcube {
  position: absolute;
  right: 21px;
  top: 45px;
  width: 122px;
  height: 122px;
  display: grid;
  grid-template: "a n b" 1fr "w t e" 52px "c s d" 1fr / 1fr 52px 1fr;
  place-items: center;
  border: 13px solid #43484f;
  border-radius: 50%;
  color: #b0b2b4;
  font: bold 22px/20px "Liberation Sans", sans-serif;
}
.n-dir {
  grid-area: n;
  margin-top: -38px;
}
.w-dir {
  grid-area: w;
  margin-left: -38px;
}
.e-dir {
  grid-area: e;
  margin-right: -38px;
}
.s-dir {
  grid-area: s;
  margin-bottom: -38px;
}
.viewcube .face {
  grid-area: t;
  width: 52px;
  height: 52px;
  justify-content: center;
  border: 1px solid #8c8f91;
  background-color: #a9abac;
}
.face span {
  width: 32px;
  background-color: #9fa4ac;
  color: #50555f;
  font: bold 12px/32px Roboto, sans-serif;
}
.viewport .wcs {
  position: absolute;
  right: 58px;
  top: 194px;
  width: 48px;
  height: 18px;
  gap: 5px;
  padding-left: 4px;
  border: 1px solid #7b7f8b;
  border-radius: 4px;
  background-color: #9a9dab;
  color: #5a5e68;
  font: 11px "Liberation Sans", sans-serif;
}
.wcs svg {
  width: 10px;
  height: 8px;
}
.navbar {
  position: absolute;
  right: 3px;
  top: 236px;
  width: 33px;
  height: 213px;
  display: flex;
  flex-direction: column;
  align-items: center;
  justify-content: space-between;
  padding: 2px 0;
  border-radius: 4px;
  background-color: #62666d;
}
.navbar button {
  flex-direction: column;
  gap: 5px;
}
.navbar button svg {
  width: 24px;
  height: 24px;
}
.navbar .arrow {
  border-top-color: #464c55;
}
.navbar .mini {
  width: 8px;
  height: 8px;
  align-self: flex-end;
  margin-right: 2px;
}
.ucs {
  position: absolute;
  left: 13px;
  bottom: 11px;
  width: 80px;
  height: 80px;
}
.ucs path {
  fill: none;
  stroke: #fff;
}
.ucs text {
  fill: #fff;
  font: 300 19px "Open Sans", sans-serif;
}
.command {
  position: absolute;
  left: 80px;
  right: 385px;
  bottom: 1px;
  height: 25px;
  display: flex;
  align-items: center;
  background-color: #252b35;
}
.command .grip {
  width: 6px;
  height: 18px;
  margin: 0 5px 0 4px;
}
.command button svg {
  width: 12px;
  height: 12px;
}
.command button + button {
  margin: 0 5px 0 10px;
}
.command button + button svg {
  width: 16px;
  height: 16px;
}
.command-line {
  flex: 1;
  display: flex;
  align-items: center;
  gap: 2px;
  height: 25px;
  padding: 0 3px 0 4px;
  border-radius: 1px;
  background-color: #bbbdbf;
}
.command-line .arrow.wide {
  border-top-color: #555;
}
.command-line input {
  flex: 1;
  border: none;
  padding: 0 4px;
  background: none;
  font: italic 12px "Liberation Mono", monospace;
}
.command-line input::placeholder {
  color: #5c5e61;
  opacity: 1;
}

/* status bar */
.statusbar {
  height: 30px;
  flex: none;
  display: flex;
  justify-content: space-between;
}
.layout-tabs {
  height: 24px;
  padding-left: 8px;
}
.status {
  display: flex;
  gap: 3px;
  padding: 2px 2px 4px 0;
}
.status-group {
  display: flex;
  background-color: #323a47;
}
.status-group button {
  width: 24px;
  justify-content: center;
}
.status-group .on {
  width: 22px;
  margin-right: 1px;
  background-color: #6090c6;
}
.status-group .drop {
  width: 16px;
}
.status-group .model {
  width: 47px;
  font-size: 12px;
}
.status-group .scale {
  width: 34px;
  gap: 4px;
  font-size: 12px;
}
```
FILE: script.js
```js
const SVG_NS = "http://www.w3.org/2000/svg";

function addPath(parent, d) {
  const path = document.createElementNS(SVG_NS, "path");
  path.setAttribute("d", d);
  parent.appendChild(path);
}

// Grid: a major line every 5 minor ones
const major = document.getElementById("gridMajor");
const minor = document.getElementById("gridMinor");
const step = 20.74;
const size = 4000;

for (let i = 0; i < 180; i++) {
  const x = Math.round(4.6 + i * step) + 0.5;
  const y = Math.round(94.5 + (i - 5) * step) + 0.5;
  const group = i % 5 === 0 ? major : minor;
  addPath(group, `M${x} 0V${size}`);
  addPath(group, `M0 ${y}H${size}`);
}

// Hatch lines at 45 degrees
const hatch = document.getElementById("hatchLines");
for (let i = 0; i < 38; i++) {
  const sum = 634 + i * 22;
  addPath(hatch, `M${sum - 230} 230L${sum - 519} 519`);
}
```
